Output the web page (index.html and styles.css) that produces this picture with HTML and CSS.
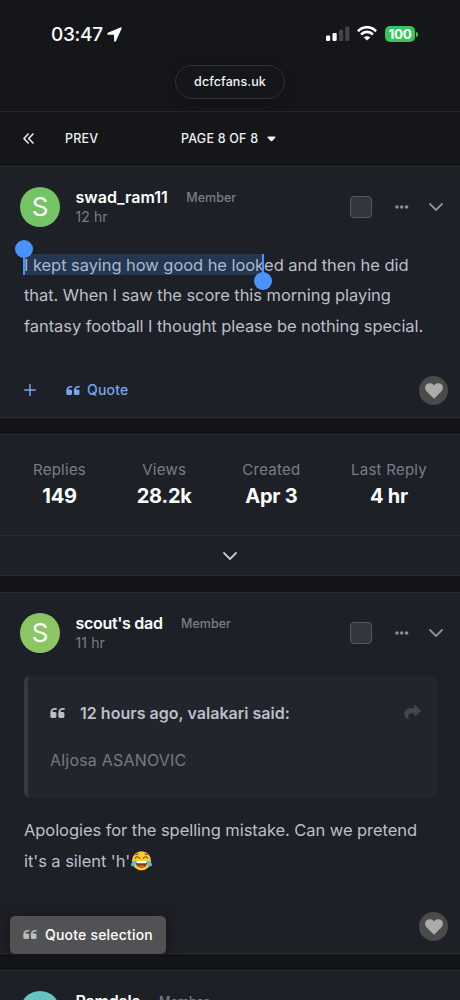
FILE: index.html
```
<!DOCTYPE html>
<html lang="en">
<head>
<meta charset="utf-8">
<meta name="viewport" content="width=device-width, initial-scale=1">
<title>dcfcfans.uk</title>
<link rel="stylesheet" href="styles.css">
</head>
<body>
<svg class="defs" width="0" height="0" aria-hidden="true">
  <symbol id="quote" viewBox="0 0 14 11"><path d="M5.600 .9H4.700C2 .9.3 2.700.3 5.400V8.600a1.500 1.500 0 0 0 1.500 1.500H4.500A1.500 1.500 0 0 0 6 8.600V6.100a1.500 1.500 0 0 0-1.500-1.500H2.300C2.300 3.200 3.200 2.500 4.700 2.500h.9a.8.8 0 0 0 0-1.600ZM13.100.9h-.9C9.500.9 7.800 2.700 7.800 5.400V8.600a1.500 1.500 0 0 0 1.500 1.500H12a1.500 1.500 0 0 0 1.500-1.500V6.100A1.500 1.500 0 0 0 12 4.600H9.800C9.800 3.200 10.700 2.500 12.200 2.500h.9a.8.8 0 0 0 0-1.600Z" fill="currentColor"/></symbol>
  <symbol id="chevron" viewBox="0 0 16 10"><path d="M2 2 8 8l6-6" fill="none" stroke="currentColor" stroke-width="1.800" stroke-linecap="round" stroke-linejoin="round"/></symbol>
  <symbol id="dots" viewBox="0 0 14 4"><g fill="currentColor"><circle cx="2" cy="2" r="1.750"/><circle cx="6.800" cy="2" r="1.750"/><circle cx="11.600" cy="2" r="1.750"/></g></symbol>
  <symbol id="heart" viewBox="0 0 18 16"><path d="M9 15.700 1.500 8.300C-.4 6.300-.3 3.100 1.600 1.300 3.500-.4 6.500-.2 8.200 1.600L9 2.500l.8-.9C11.500-.2 14.500-.4 16.400 1.300c1.900 1.800 2 5 .1 7Z" fill="currentColor"/></symbol>
</svg>

<header class="top">
  <div class="status">
    <span class="clock">03:47</span>
    <svg class="locate" width="15" height="15" viewBox="0 0 16 16"><path d="M14.300.4.9 6.200C-.2 6.700 0 8.100 1.200 8.200l6.300.1.1 6.300c0 1.200 1.500 1.500 2 .4L15.600 1.700C16 .8 15.200 0 14.300.4Z" fill="#fff"/></svg>
    <div class="radios">
      <svg width="24" height="16" viewBox="0 0 24 16"><rect x="0" y="9.500" width="4.200" height="5.500" rx="1.200" fill="#fff"/><rect x="6.500" y="7" width="4.200" height="8" rx="1.200" fill="#fff"/><rect x="13" y="3.800" width="4.200" height="11.200" rx="1.200" fill="#434446"/><rect x="19.200" y=".5" width="4.200" height="14.500" rx="1.200" fill="#434446"/></svg>
      <svg class="wifi" width="20" height="15" viewBox="0 0 20 15"><g fill="none" stroke="#fff" stroke-width="2.700"><path d="M.9 5.200C6-.1 14-.1 19.100 5.200"/><path d="M4.100 8.500c3.400-3.400 8.400-3.400 11.800 0"/></g><path d="M6.800 11.400c1.900-1.700 4.500-1.700 6.400 0L10 14.600Z" fill="#fff"/></svg>
      <span class="battery">100</span><i class="cap"></i>
    </div>
  </div>
  <div class="address">dcfcfans.uk</div>
</header>

<nav class="pager">
  <svg class="first" width="12" height="11" viewBox="0 0 12 11"><path d="M5.200 1 .9 5.500 5.200 10M10 1 5.700 5.500 10 10" fill="none" stroke="#f0f0f1" stroke-width="1.500" stroke-linecap="round" stroke-linejoin="round"/></svg>
  <span class="prev">PREV</span>
  <span class="page">PAGE 8 OF 8</span>
  <svg class="caret" width="9" height="6" viewBox="0 0 9 6"><path d="M1.200.5h6.600c.7 0 1 .8.5 1.200L5.200 4.900a1 1 0 0 1-1.400 0L.7 1.700C.2 1.300.5.5 1.200.5Z" fill="#f0f0f1"/></svg>
</nav>

<main>
  <article class="card post first-post">
    <header class="author">
      <span class="avatar green">S</span>
      <div class="who"><div class="line"><b class="n1">swad_ram11</b><span class="role">Member</span></div><time>12 hr</time></div>
      <div class="tools"><i class="box"></i><svg class="dots" width="14" height="4"><use href="#dots"/></svg><svg width="16" height="10"><use href="#chevron"/></svg></div>
    </header>
    <p class="body body1"><span class="l1"><span class="sel">I kept saying how good he look<i class="grip start"></i><i class="grip end"></i></span>ed and then he did</span><br><span class="l2">that. When I saw the score this morning playing</span><br><span class="l3">fantasy football I thought please be nothing special.</span></p>
    <footer class="actions">
      <svg width="12" height="12" viewBox="0 0 12 12"><path d="M6 .7v10.600M.7 6h10.600" stroke="currentColor" stroke-width="1.500" stroke-linecap="round"/></svg>
      <svg class="q" width="14" height="11"><use href="#quote"/></svg><span>Quote</span>
      <span class="like"><svg width="18" height="16"><use href="#heart"/></svg></span>
    </footer>
  </article>

  <section class="card stats">
    <dl>
      <div><dt>Replies</dt><dd>149</dd></div>
      <div><dt>Views</dt><dd>28.2k</dd></div>
      <div><dt>Created</dt><dd>Apr 3</dd></div>
      <div><dt>Last Reply</dt><dd>4 hr</dd></div>
    </dl>
    <div class="expand"><svg width="16" height="10"><use href="#chevron"/></svg></div>
  </section>

  <article class="card post second-post">
    <header class="author">
      <span class="avatar lime">S</span>
      <div class="who"><div class="line"><b class="n2">scout's dad</b><span class="role">Member</span></div><time>11 hr</time></div>
      <div class="tools"><i class="box"></i><svg class="dots" width="14" height="4"><use href="#dots"/></svg><svg width="16" height="10"><use href="#chevron"/></svg></div>
    </header>
    <blockquote>
      <div class="cite"><svg width="15" height="12"><use href="#quote"/></svg><span>12 hours ago, valakari said:</span>
        <svg class="share" width="17" height="15" viewBox="0 0 17 15"><path d="M10 .9c0-.7.7-1 1.200-.6l5.400 4.800c.4.400.4.900 0 1.300l-5.400 4.800c-.5.400-1.200.1-1.200-.6V8.200H8c-3.700 0-4.300 2.200-3.200 5.200.3.900-.5 1.100-1.200.6C1.500 12.800.3 11 .3 8.800.3 4.800 3.200 3.300 7 3.300h3Z" fill="currentColor"/></svg></div>
      <p>Aljosa ASANOVIC</p>
    </blockquote>
    <p class="body body2"><span class="l4">Apologies for the spelling mistake. Can we pretend</span><br><span class="l5">it's a silent 'h'</span><svg class="joy" width="21" height="20" viewBox="0 0 21 20" role="img" aria-label="face with tears of joy"><circle cx="10.500" cy="9.800" r="9.500" fill="#fccb32"/><path d="M4.500 10h12c0 4-2.300 6.700-6 6.700S4.500 14 4.500 10Z" fill="#75401c"/><path d="M5.200 10h10.600l-.4 2.200H5.600Z" fill="#fff"/><path d="M7 15.100c2-1.100 5-1.100 7 0-1.800 2-5.200 2-7 0Z" fill="#e8543e"/><path d="M4.300 7.300c.9-2 2.900-2 4.200 0M12.500 7.300c1.300-2 3.300-2 4.200 0M4.800 3.700l2.300-.9M13.900 2.800l2.300.9" fill="none" stroke="#70421b" stroke-width="1.100" stroke-linecap="round"/><path d="M5 9.500c-2.500.4-5 2-5 4.100 0 1.500 1.200 2.200 2.400 1.800C4.500 14.700 5 12 5 9.500ZM16 9.500c2.500.4 5 2 5 4.100 0 1.500-1.200 2.200-2.400 1.800C16.500 14.700 16 12 16 9.500Z" fill="#49bdf0"/></svg></p>
    <footer class="actions"><span class="like"><svg width="18" height="16"><use href="#heart"/></svg></span></footer>
    <div class="popup"><svg width="14" height="11"><use href="#quote"/></svg><span>Quote selection</span></div>
  </article>

  <article class="card post third-post">
    <header class="author">
      <span class="avatar teal">R</span>
      <div class="who"><div class="line"><b class="n3">Ramdale</b><span class="role">Member</span></div></div>
      <div class="tools"><i class="box"></i></div>
    </header>
  </article>
</main>
</body>
</html>
```
FILE: styles.css
```
* { box-sizing: border-box; }
html, body { margin: 0; height: 1000px; overflow: hidden; }
body { background: #141518; color: #bcbfca; font-family: Inter, "Liberation Sans", sans-serif; }
svg { display: block; flex: none; }
.defs { position: absolute; }
p, dl, dd, blockquote { margin: 0; }

.top { height: 112px; border-bottom: 1px solid #26282b; background: #15161a; }
.status { display: flex; height: 65px; padding: 26px 42px 0 51px; }
.clock { color: #fff; font-size: 19px; font-weight: 550; line-height: 17px; letter-spacing: -.3px; width: 56px; }
.locate { margin-top: 1px; }
.radios { display: flex; margin-left: auto; }
.wifi { margin-left: 7px; }
.battery { margin-left: 8px; width: 30px; height: 16px; border-radius: 5px; background: #34c759; color: #fff; font-size: 13.500px; font-weight: 700; line-height: 16px; text-align: center; letter-spacing: -.3px; }
.cap { width: 2px; height: 5px; margin: 6px 0 0 1px; border-radius: 0 2px 2px 0; background: #34c759; }
.address { width: 110px; height: 34px; margin-left: 175px; border: 1px solid #303135; border-radius: 17px; color: #f2f2f3; font-size: 12.500px; font-weight: 500; letter-spacing: .1px; line-height: 32px; text-align: center; box-shadow: 0 4px 12px #111214; }

.pager { display: flex; align-items: center; height: 54px; padding: 0 23px 1px; color: #f0f0f1; font-size: 12.500px; font-weight: 550; letter-spacing: .2px; background: #15161a; }
.prev { margin-left: 30px; width: 116px; }
.page { width: 77px; white-space: nowrap; }
.caret { margin-left: 9px; }

main { display: flex; flex-direction: column; gap: 16px; }
.card { flex: none; background: #1e2027; border: solid #2a2c32; border-width: 1px 0; }
.post { position: relative; display: flex; flex-direction: column; padding: 20px 16px 0 20px; }
.first-post { height: 252px; }
.second-post { height: 362px; }
.third-post { height: 80px; }
.author { display: flex; height: 40px; flex: none; }
.avatar { width: 40px; height: 40px; border-radius: 50%; color: #fff; font-size: 26px; line-height: 40px; text-align: center; }
.green { background: #74c465; }
.lime { background: #8cc563; }
.teal { background: #65c5c0; }
.who { margin-left: 15.500px; }
.line { display: flex; height: 21px; line-height: 21px; }
.line b { color: #fff; font-size: 16px; font-weight: 600; }
.line .n2 { letter-spacing: -.3px; }
.line .n3 { letter-spacing: -.25px; }
.role { margin-left: 18.500px; color: #777d8a; font-size: 12.500px; font-weight: 500; }
time { display: block; color: #777d8a; font-size: 14px; line-height: 18px; letter-spacing: .1px; }
.tools { display: flex; align-items: center; margin-left: auto; color: #8a909e; }
.tools svg:last-child { margin-right: .5px; }
.box { width: 22px; height: 22px; border: 1px solid #545962; border-radius: 4px; background: #31363f; }
.third-post .box { margin-right: 72px; }
.tools .dots { margin: 0 18.500px 0 23px; }

.body { margin-left: 4px; font-size: 16.500px; line-height: 30.400px; letter-spacing: -.065px; white-space: nowrap; }
.body1 { margin-top: 23px; height: 92px; }
.sel { position: relative; background: #253750; color: #a9b8d2; padding: 1px 0 0; }
.grip { position: absolute; width: 2px; height: 21px; top: 0; background: #4894fc; }
.grip::after { content: ""; position: absolute; left: -8px; width: 18px; height: 18px; border-radius: 50%; background: #4894fc; }
.start { left: -1px; }
.start::after { top: -14px; }
.end { right: 0; }
.end::after { top: 18px; }

.actions { display: flex; align-items: center; height: 30px; margin-top: 33px; padding: 0 0 1px 4px; color: #77a5ee; font-size: 14px; font-weight: 550; letter-spacing: .2px; }
.actions > svg:first-child { margin-left: -.5px; }
.actions .q { margin: 1px 7px 0 30.500px; }
.like { display: flex; justify-content: center; align-items: center; width: 29px; height: 29px; margin-left: auto; margin-right: -4px; border-radius: 50%; background: #4a4a4b; color: #ababac; }
.first-post .like { margin-top: 2px; }

.stats { height: 142px; }
.stats dl { display: flex; justify-content: space-between; height: 101px; padding: 24px 33px 0; border-bottom: 1px solid #2a2c32; text-align: center; }
dt { color: #777d8a; font-size: 15px; line-height: 22px; letter-spacing: .25px; }
dd { color: #fff; font-size: 20px; font-weight: 700; line-height: 30px; letter-spacing: -.2px; }
.expand { display: flex; justify-content: center; padding-top: 15px; color: #c4c7d2; }

blockquote { width: 413px; height: 122px; margin: 23px 0 0 4px; padding: 24px 16px 0 22px; border-left: 4px solid #383a41; border-radius: 6px; background: #23252d; }
.cite { display: flex; align-items: center; height: 26px; color: #bcbfca; font-size: 16px; font-weight: 600; letter-spacing: .03px; }
.cite span { margin-left: 15px; }
.share { margin-left: auto; margin-top: -2px; color: #43464e; }
blockquote p { margin-top: 20px; color: #747a86; font-size: 16px; line-height: 28px; letter-spacing: .2px; }
.body2 { margin-top: 17px; height: 62px; line-height: 31px; }
.joy { display: inline-block; vertical-align: -4px; margin-left: .5px; }
.second-post .actions { margin-top: 35px; }
.popup { position: absolute; left: 10px; top: 323px; display: flex; align-items: center; width: 156px; height: 38px; padding: 0 0 2px 13px; border-radius: 5px; background: #505254; color: #fff; font-size: 14px; font-weight: 550; letter-spacing: .2px; box-shadow: 0 1px 14px #15161a; }
.popup svg { color: #bbbcbd; margin-right: 8px; }
```
